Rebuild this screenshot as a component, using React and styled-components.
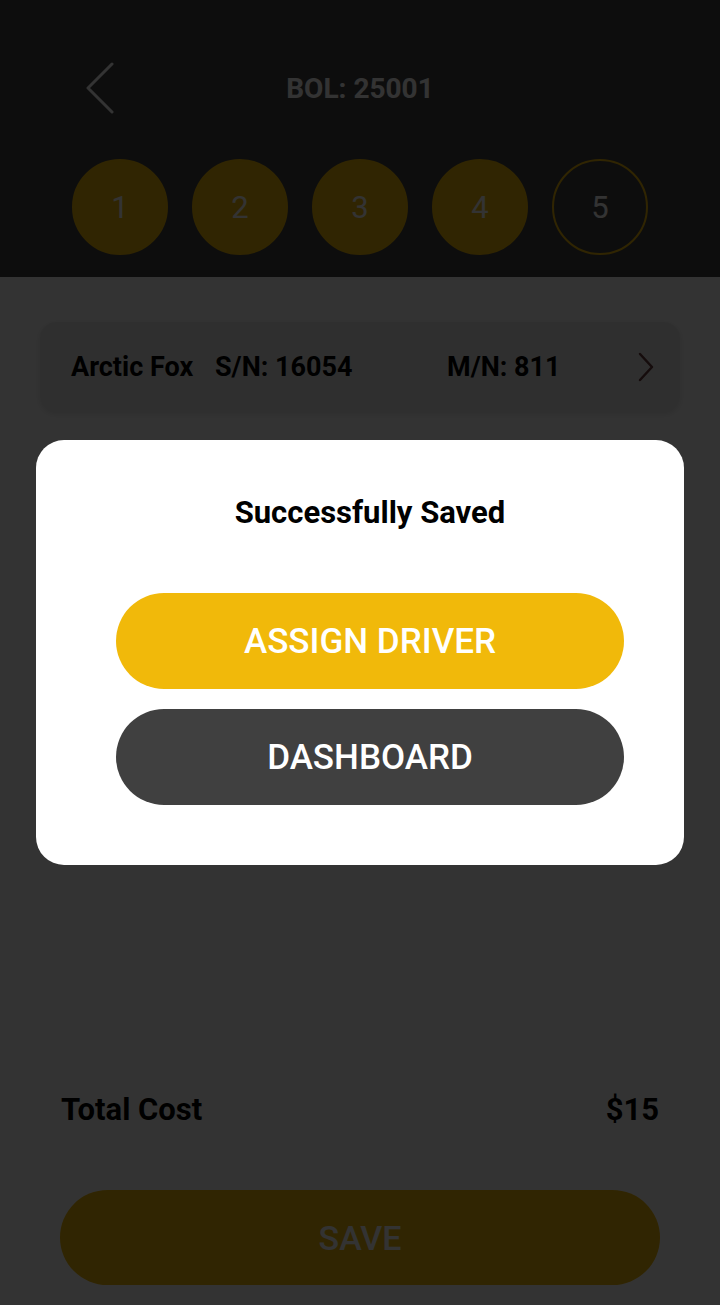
import React from 'react';
import styled, { createGlobalStyle } from 'styled-components';

const GlobalStyle = createGlobalStyle`
  html, body {
    margin: 0;
    padding: 0;
    background: #333;
  }
  body {
    font-family: Roboto, "Liberation Sans", sans-serif;
  }
  * {
    box-sizing: border-box;
  }
`;

const YELLOW = '#f1b90a';

const steps = [1, 2, 3, 4, 5];

export default function App() {
  return (
    <>
      <GlobalStyle />
      <Screen>
        <Header>
          <TopBar>
            <BackButton aria-label="Back">
              <svg width="28" height="52" viewBox="0 0 28 52" fill="none">
                <polyline points="26,2 2,26 26,50" stroke="#fff" strokeWidth="3" strokeLinecap="round" strokeLinejoin="round" />
              </svg>
            </BackButton>
            <Title>BOL: 25001</Title>
          </TopBar>
          <Steps>
            {steps.map((n) => (
              <Step key={n} done={n < 5}>
                {n}
              </Step>
            ))}
          </Steps>
        </Header>

        <Body>
          <UnitCard>
            <UnitName>Arctic Fox</UnitName>
            <UnitSerial>S/N: 16054</UnitSerial>
            <UnitModel>M/N: 811</UnitModel>
            <svg width="20" height="30" viewBox="0 0 20 30" fill="none">
              <polyline points="4,2 16,15 4,28" stroke="#6a3c3c" strokeWidth="2.5" strokeLinecap="round" strokeLinejoin="round" />
            </svg>
          </UnitCard>

          <Footer>
            <TotalRow>
              <span>Total Cost</span>
              <span>$15</span>
            </TotalRow>
            <SaveButton>SAVE</SaveButton>
          </Footer>
        </Body>

        <Overlay>
          <Modal>
            <ModalTitle>Successfully Saved</ModalTitle>
            <ModalActions>
              <PillButton bg={YELLOW}>ASSIGN DRIVER</PillButton>
              <PillButton bg="#404040">DASHBOARD</PillButton>
            </ModalActions>
          </Modal>
        </Overlay>
      </Screen>
    </>
  );
}

const Screen = styled.div`
  position: relative;
  width: 720px;
  min-height: 1305px;
  display: flex;
  flex-direction: column;
  background: #fff;
  overflow: hidden;
`;

const Header = styled.header`
  background: #434343;
  height: 277px;
  padding-top: 50px;
  display: flex;
  flex-direction: column;
`;

const TopBar = styled.div`
  position: relative;
  height: 76px;
  display: flex;
  align-items: center;
  justify-content: center;
`;

const BackButton = styled.button`
  position: absolute;
  left: 86px;
  top: 12px;
  border: 0;
  background: none;
  padding: 0;
  display: flex;
`;

const Title = styled.h1`
  margin: 0;
  color: #fff;
  font-size: 28px;
  font-weight: 700;
`;

const Steps = styled.div`
  margin-top: 33px;
  display: flex;
  justify-content: center;
  gap: 24px;
`;

const Step = styled.div`
  width: 96px;
  height: 96px;
  border-radius: 50%;
  display: flex;
  align-items: center;
  justify-content: center;
  font-size: 31px;
  color: #fff;
  background: ${(p) => (p.done ? YELLOW : 'transparent')};
  border: 2px solid ${YELLOW};
`;

const Body = styled.main`
  flex: 1;
  display: flex;
  flex-direction: column;
  padding: 45px 40px 20px;
`;

const UnitCard = styled.div`
  height: 90px;
  border-radius: 16px;
  background: #ececec;
  box-shadow: 0 2px 6px rgba(0, 0, 0, 0.12);
  display: flex;
  align-items: center;
  padding: 0 24px 0 31px;
  font-size: 27px;
  font-weight: 700;
  color: #000;
`;

const UnitName = styled.span`
  width: 144px;
`;

const UnitSerial = styled.span`
  width: 232px;
`;

const UnitModel = styled.span`
  flex: 1;
`;

const Footer = styled.div`
  margin-top: auto;
  display: flex;
  flex-direction: column;
  padding: 0 20px;
`;

const TotalRow = styled.div`
  display: flex;
  justify-content: space-between;
  align-items: center;
  height: 40px;
  padding: 0 1px;
  font-size: 31px;
  font-weight: 700;
  color: #000;
`;

const SaveButton = styled.button`
  margin-top: 61px;
  height: 95px;
  border: 0;
  border-radius: 48px;
  background: ${YELLOW};
  color: #fff;
  font-family: inherit;
  font-size: 34px;
  font-weight: 500;
`;

const Overlay = styled.div`
  position: absolute;
  inset: 0;
  background: rgba(0, 0, 0, 0.8);
  display: flex;
  align-items: center;
  justify-content: center;
  padding: 0 36px;
`;

const Modal = styled.div`
  width: 100%;
  background: #fff;
  border-radius: 28px;
  padding: 56px 60px 60px 80px;
  display: flex;
  flex-direction: column;
  align-items: center;
`;

const ModalTitle = styled.h2`
  margin: 0;
  line-height: 34px;
  font-size: 31px;
  font-weight: 700;
  color: #000;
`;

const ModalActions = styled.div`
  margin-top: 63px;
  width: 508px;
  display: flex;
  flex-direction: column;
  gap: 20px;
`;

const PillButton = styled.button`
  height: 96px;
  border: 0;
  border-radius: 48px;
  background: ${(p) => p.bg};
  color: #fff;
  font-family: inherit;
  font-size: 35px;
  font-weight: 500;
`;
